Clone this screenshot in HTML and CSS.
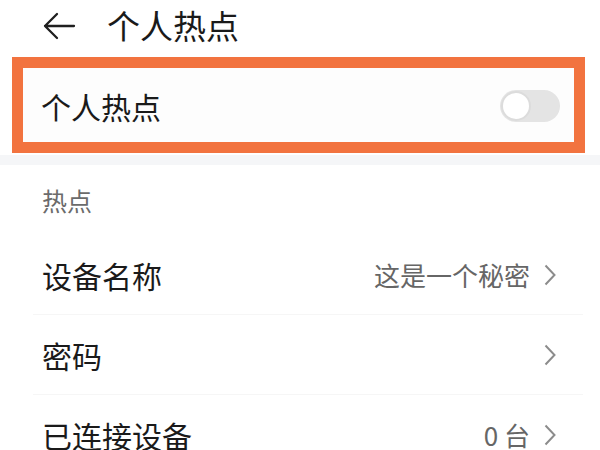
FILE: index.html
```html
<!DOCTYPE html>
<html lang="zh-CN">
<head>
<meta charset="utf-8">
<link rel="stylesheet" href="styles.css">
</head>
<body>
<div class="page">
  <header class="topbar">
    <svg class="back" width="34" height="30" viewBox="0 0 34 30">
      <path d="M32 15 H3 M15 3 L3 15 L15 27" fill="none" stroke="#1f1f1f" stroke-width="2.3" stroke-linecap="round" stroke-linejoin="round"/>
    </svg>
    <h1 class="title">个人热点</h1>
  </header>
  <div class="highlight">
    <div class="switch-row">
      <span class="label">个人热点</span>
      <span class="toggle"><span class="knob"></span></span>
    </div>
  </div>
  <div class="band"></div>
  <div class="section-head">热点</div>
  <div class="list">
    <div class="row">
      <span class="label">设备名称</span>
      <span class="value">这是一个秘密<svg class="chev" width="12" height="22" viewBox="0 0 12 22"><path d="M1.5 1.5 L10.5 11 L1.5 20.5" fill="none" stroke="#8c8c8c" stroke-width="2"/></svg></span>
    </div>
    <div class="row">
      <span class="label">密码</span>
      <span class="value"><svg class="chev" width="12" height="22" viewBox="0 0 12 22"><path d="M1.5 1.5 L10.5 11 L1.5 20.5" fill="none" stroke="#8c8c8c" stroke-width="2"/></svg></span>
    </div>
    <div class="row">
      <span class="label">已连接设备</span>
      <span class="value">0 台<svg class="chev" width="12" height="22" viewBox="0 0 12 22"><path d="M1.5 1.5 L10.5 11 L1.5 20.5" fill="none" stroke="#8c8c8c" stroke-width="2"/></svg></span>
    </div>
  </div>
</div>
</body>
</html>
```
FILE: styles.css
```css
html, body {
  margin: 0;
  padding: 0;
  background: #ffffff;
}
body {
  width: 600px;
  height: 450px;
  overflow: hidden;
  font-family: "Noto Sans CJK SC", "Noto Sans", sans-serif;
  color: #1c1c1c;
}
.page {
  display: flex;
  flex-direction: column;
}
.topbar {
  height: 57px;
  display: flex;
  align-items: center;
  padding-left: 42px;
  box-sizing: border-box;
  padding-bottom: 6px;
}
.back {
  display: block;
  margin-right: 31px;
}
.title {
  margin: 0;
  font-size: 33px;
  font-weight: 400;
  line-height: 1;
  color: #1a1a1a;
}
.highlight {
  margin: 0 15px 0 12px;
  border: 11px solid #f2733f;
  height: 96px;
  box-sizing: border-box;
  background: #fdfdfd;
}
.switch-row {
  height: 100%;
  display: flex;
  align-items: center;
  justify-content: space-between;
  padding: 2px 14px 0 18px;
  box-sizing: border-box;
}
.label {
  font-size: 30px;
  line-height: 1;
  color: #1a1a1a;
}
.toggle {
  width: 60px;
  height: 32px;
  border-radius: 16px;
  background: #e4e4e4;
  display: flex;
  align-items: center;
  padding-left: 1px;
  box-sizing: border-box;
}
.knob {
  width: 30px;
  height: 30px;
  border-radius: 50%;
  background: #ffffff;
  box-sizing: border-box;
  border: 2px solid #dcdcdc;
}
.band {
  height: 10px;
  margin-top: 2px;
  background: #f5f6f8;
}
.section-head {
  height: 70px;
  box-sizing: border-box;
  padding: 23px 0 0 42px;
  font-size: 25px;
  line-height: 1;
  color: #6b6b6b;
}
.list {
  display: flex;
  flex-direction: column;
}
.row {
  height: 80px;
  box-sizing: border-box;
  margin-left: 33px;
  margin-right: 17px;
  padding-left: 9px;
  border-bottom: 1px solid #f6f6f6;
  display: flex;
  align-items: center;
  justify-content: space-between;
}
.value {
  display: flex;
  align-items: center;
  font-size: 26px;
  line-height: 1;
  color: #666666;
  padding-right: 27px;
}
.chev {
  display: block;
  margin-left: 14px;
}
```
